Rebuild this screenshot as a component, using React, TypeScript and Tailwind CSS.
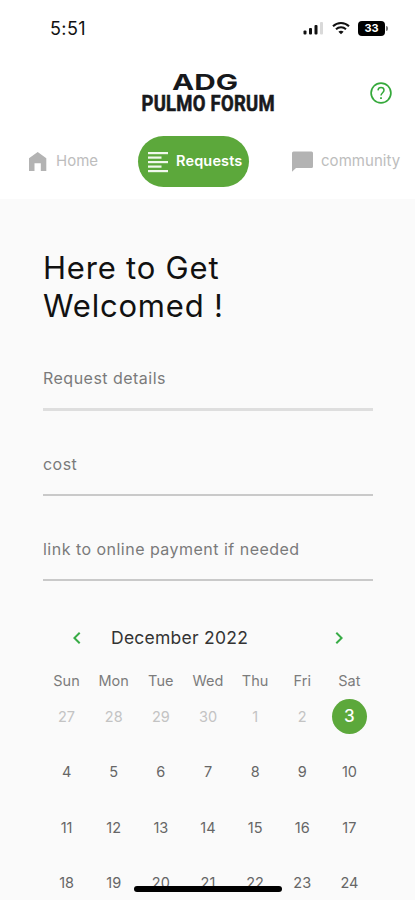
import { MdChevronLeft, MdChevronRight } from "react-icons/md";

const fields = [
  { label: "Request details", line: "h-[3px] bg-[#dedede]" },
  { label: "cost", line: "h-[2px] bg-[#c9c9c9]" },
  { label: "link to online payment if needed", line: "h-[2px] bg-[#c9c9c9]" },
];

const weekdays = ["Sun", "Mon", "Tue", "Wed", "Thu", "Fri", "Sat"];

const weeks = [
  [27, 28, 29, 30, 1, 2, 3],
  [4, 5, 6, 7, 8, 9, 10],
  [11, 12, 13, 14, 15, 16, 17],
  [18, 19, 20, 21, 22, 23, 24],
];

function StatusBar() {
  return (
    <div className="flex h-14 items-center justify-between pl-[50px] pr-[27px]">
      <span className="mt-px text-[18px] leading-none tracking-[0.4px] text-[#111]">5:51</span>
      <div className="flex items-center">
        <svg width="21" height="14" viewBox="0 0 21 14" className="mr-[8px]">
          <rect x="0.5" y="9.5" width="3" height="4" rx="1" fill="#111" />
          <rect x="6" y="7" width="3" height="6.5" rx="1" fill="#111" />
          <rect x="11.5" y="4" width="3" height="9.5" rx="1" fill="#111" />
          <rect x="17" y="1" width="3" height="12.5" rx="1" fill="#d9d9d9" />
        </svg>
        <svg width="18" height="14" viewBox="0 0 18 14" className="mr-[8px]" fill="none" stroke="#111" strokeWidth="2">
          <path d="M1 5.2C5.4 0.8 12.6 0.8 17 5.2" />
          <path d="M4 8.3C6.8 5.6 11.2 5.6 14 8.3" />
          <path d="M9 13.2L6.4 10.7C7.9 9.3 10.1 9.3 11.6 10.7Z" fill="#111" stroke="none" />
        </svg>
        <div className="flex h-[15px] w-[27px] items-center justify-center rounded-[4px] bg-black text-[11px] font-bold leading-none text-white">
          33
        </div>
        <div className="ml-px h-[5px] w-[2px] rounded-r-full bg-[#777]" />
      </div>
    </div>
  );
}

function Logo() {
  return (
    <svg width="134" height="44" viewBox="0 -2 134 44" className="-mt-[2px] overflow-visible" fill="#17191c">
      <text
        transform="translate(31 18.5) scale(1.42 1)"
        fontFamily="Inter, sans-serif"
        fontSize="22"
        fontWeight="700"
        textLength="46.5"
        lengthAdjust="spacingAndGlyphs"
      >
        ADG
      </text>
      <text
        transform="translate(0.5 39.5) scale(0.84 1)"
        fontFamily="Roboto, sans-serif"
        fontSize="22"
        fontWeight="700"
        stroke="#17191c"
        strokeWidth="0.6"
        textLength="158.5"
        lengthAdjust="spacing"
      >
        PULMO FORUM
      </text>
    </svg>
  );
}

function Header() {
  return (
    <header className="h-[199px] bg-white">
      <StatusBar />
      <div className="flex h-20 items-start pl-[141px] pt-[15px]">
        <Logo />
        <svg width="24" height="24" viewBox="0 0 24 24" className="ml-[94px] mt-[10px]" fill="none" stroke="#35a93b">
          <circle cx="12" cy="12" r="9.9" strokeWidth="1.7" />
          <path d="M9 9.4C9.2 7.5 10.3 6.6 12 6.6C13.8 6.6 15 7.7 15 9.3C15 11.6 12 11.9 12 14.6" strokeWidth="1.5" />
          <path d="M12 16.2V18" strokeWidth="1.8" />
        </svg>
      </div>
      <nav className="flex h-[51px] items-center">
        <div className="flex w-[138px] items-center pl-7">
          <svg width="19" height="21" viewBox="0 0 19 21" fill="#b3b3b3">
            <path d="M1 7.2L9.7 1L18.3 7.2V20H12.8V12.3H6.5V20H1Z" />
          </svg>
          <span className="ml-[9px] text-[15px] text-[#bdbdbd]">Home</span>
        </div>
        <div className="flex h-[51px] w-[111px] items-center rounded-full bg-[#5ca83b] pl-[10px]">
          <svg width="20" height="22" viewBox="0 0 20 22" fill="#f0f8ec">
            <rect y="1" width="20" height="2.2" />
            <rect y="5.5" width="13.5" height="2.2" />
            <rect y="10" width="20" height="2.2" />
            <rect y="14.5" width="13.5" height="2.2" />
            <rect y="19" width="20" height="2.2" />
          </svg>
          <span className="-mt-0.5 ml-2 text-[14.5px] font-semibold tracking-[0.15px] text-white">Requests</span>
        </div>
        <div className="flex items-center pl-[43px]">
          <svg width="21" height="21" viewBox="0 0 21 21" fill="#b3b3b3">
            <path d="M1.5 0.5H19.5Q21 0.5 21 2V15.5Q21 17 19.5 17H4L0 20.8V2Q0 0.5 1.5 0.5Z" />
          </svg>
          <span className="ml-2 text-[15px] tracking-[0.05px] text-[#bdbdbd]">community</span>
        </div>
      </nav>
    </header>
  );
}

function Calendar() {
  return (
    <section className="mt-[3px]">
      <div className="flex h-6 items-center text-[#38ac46]">
        <MdChevronLeft className="ml-[22px] size-6" />
        <span className="ml-[22px] w-[216px] text-[17.5px] tracking-[0.25px] text-[#333]">December 2022</span>
        <MdChevronRight className="size-6" />
      </div>
      <div className="mt-[21px] grid grid-cols-7 text-center text-[14.5px] leading-5 tracking-[0.1px] text-[#7c7c7c]">
        {weekdays.map((day) => (
          <span key={day}>{day}</span>
        ))}
      </div>
      <div className="-mt-[2px]">
        {weeks.map((week, row) => (
          <div key={row} className="grid h-[55.5px] grid-cols-7 items-center justify-items-center text-[14.5px]">
            {week.map((day) => {
              if (row === 0 && day === 3) {
                return (
                  <span key={day} className="flex size-[35px] items-center justify-center rounded-full bg-[#5ca83b] text-[17px] font-medium text-white">
                    {day}
                  </span>
                );
              }
              return (
                <span key={day} className={row === 0 ? "text-[#c3c3c3]" : "text-[#666]"}>
                  {day}
                </span>
              );
            })}
          </div>
        ))}
      </div>
    </section>
  );
}

export default function App() {
  return (
    <div className="relative h-[900px] w-[415px] overflow-hidden bg-[#fafafa] font-['Inter',sans-serif]">
      <Header />
      <main className="pl-[43px] pr-[42px] pt-[50px]">
        <h1 className="text-[31px] leading-[38px] tracking-[0.8px] text-[#111]">
          Here to Get
          <br />
          Welcomed !
        </h1>
        <div className="mt-[41px]">
          {fields.map((field) => (
            <div key={field.label} className="h-[85.7px]">
              <div className="h-[42px] text-[16px] leading-6 tracking-[0.48px] text-[#7a7a7a]">{field.label}</div>
              <div className={field.line} />
            </div>
          ))}
        </div>
        <Calendar />
      </main>
      <div className="absolute bottom-2 left-[134px] h-[6px] w-[148px] rounded-full bg-black" />
    </div>
  );
}
